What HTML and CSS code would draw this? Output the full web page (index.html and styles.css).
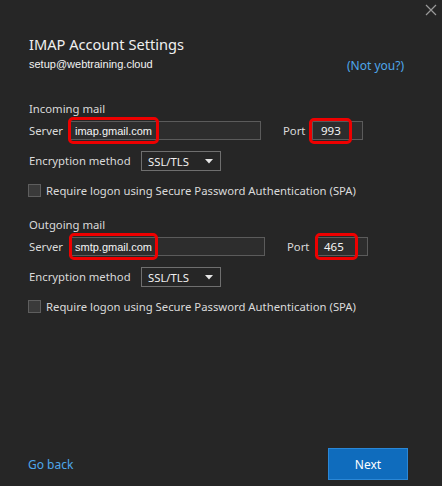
FILE: index.html
```html
<!DOCTYPE html>
<html>
<head>
<meta charset="utf-8">
<link rel="stylesheet" href="styles.css">
</head>
<body>
<div class="dialog">
  <button class="close" aria-label="Close">
    <svg width="12" height="12" viewBox="0 0 12 12"><path d="M1 1L11 11M11 1L1 11" stroke="#9a9a9a" stroke-width="1.2" fill="none"/></svg>
  </button>
  <h1 class="title">IMAP Account Settings</h1>
  <div class="account-row">
    <span class="email">setup@webtraining.cloud</span>
    <a class="link notyou">(Not you?)</a>
  </div>

  <section class="group incoming">
    <div class="group-title">Incoming mail</div>
    <div class="server-row">
      <span class="lbl lbl-server">Server</span>
      <div class="field field-server">
        <span class="val">imap.gmail.com</span>
        <span class="hl hl-server"></span>
      </div>
      <span class="lbl lbl-port">Port</span>
      <div class="field field-port">
        <span class="val num">993</span>
        <span class="hl hl-port"></span>
      </div>
    </div>
    <div class="enc-row">
      <span class="lbl lbl-enc">Encryption method</span>
      <div class="select"><span>SSL/TLS</span><svg width="8" height="5" viewBox="0 0 8 5"><path d="M0 0H8L4 4.5Z" fill="#e6e6e6"/></svg></div>
    </div>
    <label class="check-row"><span class="box"></span><span>Require logon using Secure Password Authentication (SPA)</span></label>
  </section>

  <section class="group outgoing">
    <div class="group-title">Outgoing mail</div>
    <div class="server-row">
      <span class="lbl lbl-server">Server</span>
      <div class="field field-server">
        <span class="val">smtp.gmail.com</span>
        <span class="hl hl-server"></span>
      </div>
      <span class="lbl lbl-port">Port</span>
      <div class="field field-port">
        <span class="val num">465</span>
        <span class="hl hl-port"></span>
      </div>
    </div>
    <div class="enc-row">
      <span class="lbl lbl-enc">Encryption method</span>
      <div class="select"><span>SSL/TLS</span><svg width="8" height="5" viewBox="0 0 8 5"><path d="M0 0H8L4 4.5Z" fill="#e6e6e6"/></svg></div>
    </div>
    <label class="check-row"><span class="box"></span><span>Require logon using Secure Password Authentication (SPA)</span></label>
  </section>

  <footer class="footer">
    <a class="link goback">Go back</a>
    <button class="next">Next</button>
  </footer>
</div>
</body>
</html>
```

FILE: styles.css
```css
html, body {
  margin: 0;
  padding: 0;
  background: #262626;
}
body {
  font-family: "Noto Sans", "Open Sans", sans-serif;
  color: #e3e3e3;
  font-size: 11.3px;
}
.dialog {
  position: relative;
  height: 486px;
  box-sizing: border-box;
  padding: 34px 0 6px 29px;
  display: flex;
  flex-direction: column;
}
.close {
  position: absolute;
  top: 4px;
  right: 5px;
  width: 12px;
  height: 12px;
  padding: 0;
  border: 0;
  background: none;
  display: block;
}
.close svg { display: block; }
.title {
  margin: 0;
  font-weight: normal;
  font-size: 14.6px;
  line-height: 21px;
  color: #f0f0f0;
}
.account-row {
  display: flex;
  justify-content: space-between;
  align-items: flex-start;
  padding-right: 38px;
  height: 20px;
}
.email {
  font-family: "Liberation Sans", Arial, sans-serif;
  font-size: 11px;
  line-height: 14px;
  margin-top: 2px;
  color: #f2f2f2;
}
.link {
  color: #4ea6ea;
  cursor: pointer;
}
.notyou {
  font-size: 12px;
  line-height: 16px;
  margin-top: 3px;
}
.group { display: flex; flex-direction: column; }
.incoming { margin-top: 26px; }
.outgoing { margin-top: 20px; }
.group-title {
  line-height: 16px;
  height: 16px;
  color: #dadada;
}
.server-row {
  display: flex;
  align-items: center;
  margin-top: 4px;
  height: 19px;
}
.lbl { color: #dadada; line-height: 16px; }
.lbl-server { width: 40px; }
.field {
  position: relative;
  box-sizing: border-box;
  height: 19px;
  background: #2d2d2d;
  border: 1px solid #5b5b5b;
  display: flex;
  align-items: center;
}
.incoming .field-server { width: 192px; }
.outgoing .field-server { width: 196px; }
.lbl-port { margin-left: 22px; }
.incoming .lbl-port { width: 29px; }
.outgoing .lbl-port { width: 28px; }
.incoming .field-port { width: 51px; }
.outgoing .field-port { width: 53px; }
.val {
  font-family: "Liberation Sans", Arial, sans-serif;
  font-size: 11px;
  padding-left: 5px;
  color: #f5f5f5;
}
.val.num {
  font-family: "Noto Sans", sans-serif;
  font-size: 11.5px;
  padding-left: 8px;
}
.hl {
  position: absolute;
  border: 3px solid #ee0000;
  border-radius: 5px;
  box-sizing: border-box;
  pointer-events: none;
}
.incoming .hl-server { left: -2px; top: -5px; width: 91px; height: 27px; }
.outgoing .hl-server { left: -1px; top: -5px; width: 89px; height: 27px; }
.incoming .hl-port { left: -4px; top: -4px; width: 43px; height: 26px; }
.outgoing .hl-port { left: -1px; top: -5px; width: 43px; height: 27px; }
.enc-row {
  display: flex;
  align-items: center;
  margin-top: 11px;
  height: 20px;
}
.lbl-enc { width: 112px; }
.select {
  box-sizing: border-box;
  width: 80px;
  height: 20px;
  border: 1px solid #6f6f6f;
  background: #262626;
  display: flex;
  align-items: center;
  justify-content: space-between;
  padding: 0 7px 0 6px;
  color: #f0f0f0;
}
.select svg { display: block; }
.check-row {
  display: flex;
  align-items: center;
  margin-top: 12px;
  height: 14px;
  color: #dadada;
}
.box {
  box-sizing: border-box;
  width: 13px;
  height: 13px;
  border: 1px solid #5e5e5e;
  background: #3a3a3a;
  margin-left: -1px;
  margin-right: 5px;
}
.footer {
  margin-top: auto;
  display: flex;
  justify-content: space-between;
  align-items: center;
  padding-right: 34px;
}
.goback { font-size: 12px; margin-left: -1px; }
.next {
  width: 80px;
  height: 32px;
  box-sizing: border-box;
  background: #0f6cbd;
  border: 1px solid #2a87d6;
  color: #ffffff;
  font-family: "Noto Sans", sans-serif;
  font-size: 12px;
  padding: 0;
}
```
